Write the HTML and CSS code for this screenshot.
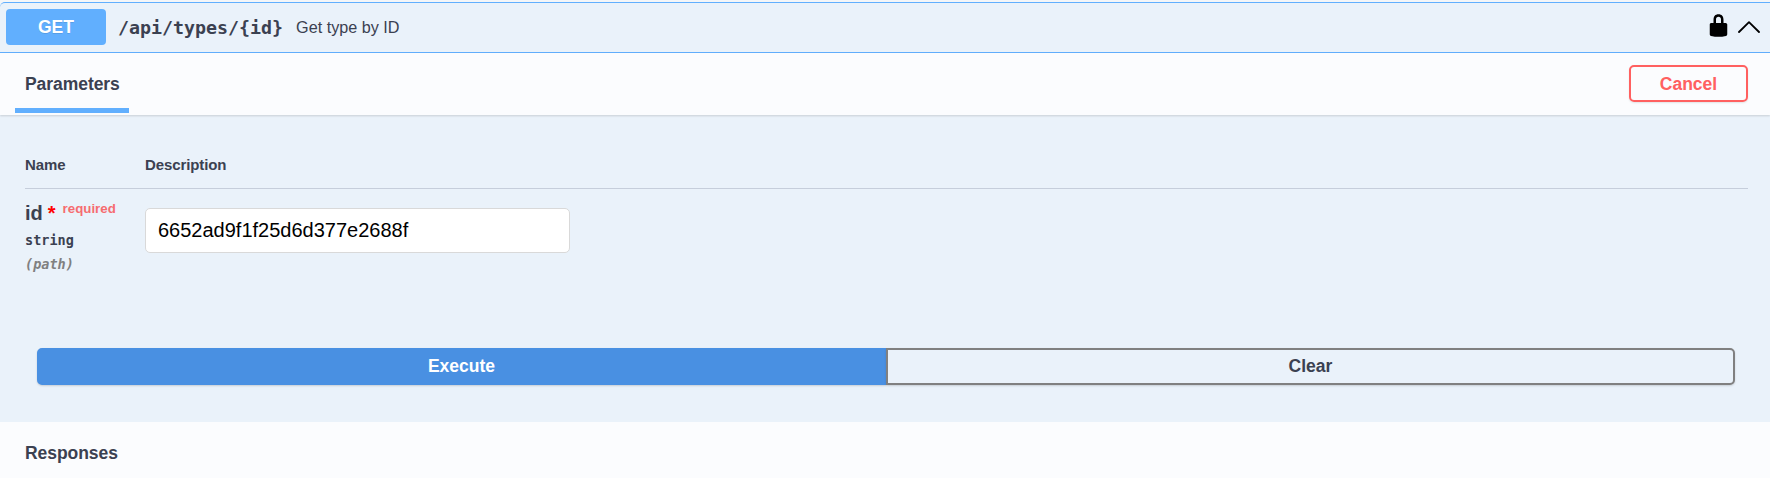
FILE: index.html
```html
<!DOCTYPE html>
<html lang="en">
<head>
<meta charset="utf-8">
<title>API operation</title>
<link rel="stylesheet" href="styles.css">
</head>
<body>
<section class="opblock">
  <header class="summary">
    <span class="method">GET</span>
    <span class="path">/api/types/{id}</span>
    <span class="summary-text">Get type by ID</span>
    <svg class="lock" viewBox="0 0 20 20"><path d="M15.8 8H14V5.6C14 2.703 12.665 1 10 1 7.334 1 6 2.703 6 5.6V8H4c-.553 0-1 .646-1 1.199V17c0 .549.428 1.139.951 1.307l1.197.387C5.672 18.861 6.55 19 7.1 19h5.8c.549 0 1.428-.139 1.951-.307l1.196-.387c.524-.167.953-.757.953-1.306V9.199C17 8.646 16.352 8 15.8 8zM12 8H8V5.199C8 3.754 8.797 3 10 3c1.203 0 2 .754 2 2.199V8z"/></svg>
    <svg class="arrow" viewBox="0 0 22 12"><path d="M1 11 11 1.2 21 11" fill="none" stroke="#000" stroke-width="1.8" stroke-linecap="round" stroke-linejoin="round"/></svg>
  </header>
  <div class="section-header">
    <h4 class="tab">Parameters</h4>
    <button class="cancel">Cancel</button>
  </div>
  <div class="content">
    <div class="table-head"><span>Name</span><span>Description</span></div>
    <div class="row">
      <div class="param">
        <div class="name">id<span class="star">*</span><span class="required">required</span></div>
        <div class="type">string</div>
        <div class="in">(path)</div>
      </div>
      <input class="field" type="text" value="6652ad9f1f25d6d377e2688f">
    </div>
    <div class="actions">
      <button class="execute">Execute</button>
      <button class="clear">Clear</button>
    </div>
  </div>
  <div class="responses"><h4>Responses</h4></div>
</section>
</body>
</html>
```
FILE: styles.css
```css
* { box-sizing: border-box; }
body {
  margin: 0;
  height: 478px;
  overflow: hidden;
  padding-top: 2px;
  background: #f4f6f8;
  color: #3b4151;
  font-family: "Liberation Sans", Arial, sans-serif;
}
h4 { margin: 0; font-size: 17.5px; line-height: 20px; letter-spacing: -.06px; }
button, input { font-family: inherit; margin: 0; }
.opblock {
  height: 476px;
  border-top: 1px solid #61affe;
  border-top-left-radius: 5px;
  background: #eaf2fa;
  display: flex;
  flex-direction: column;
}
.summary {
  height: 50px;
  flex: none;
  display: flex;
  align-items: center;
  padding: 0 10px 2px 6px;
  border-bottom: 1px solid #61affe;
}
.method {
  width: 100px;
  height: 36px;
  line-height: 36px;
  border-radius: 4px;
  background: #61affe;
  color: #fff;
  font-size: 17.5px;
  font-weight: 700;
  text-align: center;
  text-shadow: 0 1px 0 rgba(0, 0, 0, .1);
}
.path {
  margin-left: 12px;
  padding-top: 2px;
  font: 700 18.3px "DejaVu Sans Mono", monospace;
}
.summary-text { margin-left: 13px; padding-top: 2px; font-size: 16.2px; }
.lock { width: 25px; height: 25px; margin: 0 0 2px auto; }
.arrow { width: 22px; height: 12px; margin-left: 7px; }
.section-header {
  height: 62px;
  flex: none;
  display: flex;
  justify-content: space-between;
  padding: 12px 22px 0 15px;
  background: #fbfcfe;
  box-shadow: 0 1px 2px rgba(0, 0, 0, .15);
}
.tab {
  width: 114px;
  height: 48px;
  padding: 9px 10px 0;
  border-bottom: 5px solid #61affe;
}
.cancel {
  width: 119px;
  height: 37px;
  padding: 2px 0 0;
  border: 2px solid #ff6060;
  border-radius: 5px;
  background: transparent;
  color: #ff6060;
  font-size: 17.5px;
  font-weight: 700;
  box-shadow: 0 1px 2px rgba(0, 0, 0, .1);
}
.content { height: 307px; flex: none; padding: 0 22px 0 25px; }
.table-head {
  height: 74px;
  display: grid;
  grid-template-columns: 120px 1fr;
  padding-top: 41px;
  border-bottom: 1px solid #c6cedb;
  font-size: 15px;
  letter-spacing: -.1px;
  font-weight: 700;
  line-height: 18px;
}
.row { height: 159px; display: grid; grid-template-columns: 120px 425px; }
.name { display: flex; padding-top: 12px; font-size: 20px; font-weight: 700; line-height: 24px; }
.star { margin-left: 5px; color: #f00; }
.required { margin-left: 7px; font-size: 13.3px; line-height: 15px; color: #f66c70; }
.type { margin-top: 5px; font: 700 13.5px/20px "DejaVu Sans Mono", monospace; }
.in { margin-top: 4px; color: #808080; font: italic 700 13.5px/20px "DejaVu Sans Mono", monospace; }
.field {
  width: 425px;
  height: 45px;
  margin-top: 19px;
  padding: 0 12px;
  border: 1px solid #d9d9d9;
  border-radius: 5px;
  background: #fff;
  color: #000;
  font-size: 20px;
}
.actions { display: flex; height: 37px; padding: 0 13px 0 12px; }
.execute, .clear {
  flex: 1;
  height: 37px;
  font-size: 17.5px;
  font-weight: 700;
  box-shadow: 0 1px 2px rgba(0, 0, 0, .15);
}
.execute { border: 2px solid #4990e2; border-radius: 5px 0 0 5px; background: #4990e2; color: #fff; }
.clear { border: 2px solid #808080; border-radius: 0 5px 5px 0; background: #eaf2fa; color: #3b4151; }
.responses { flex: 1; padding: 21px 25px 0; background: #fbfcfe; }
```
